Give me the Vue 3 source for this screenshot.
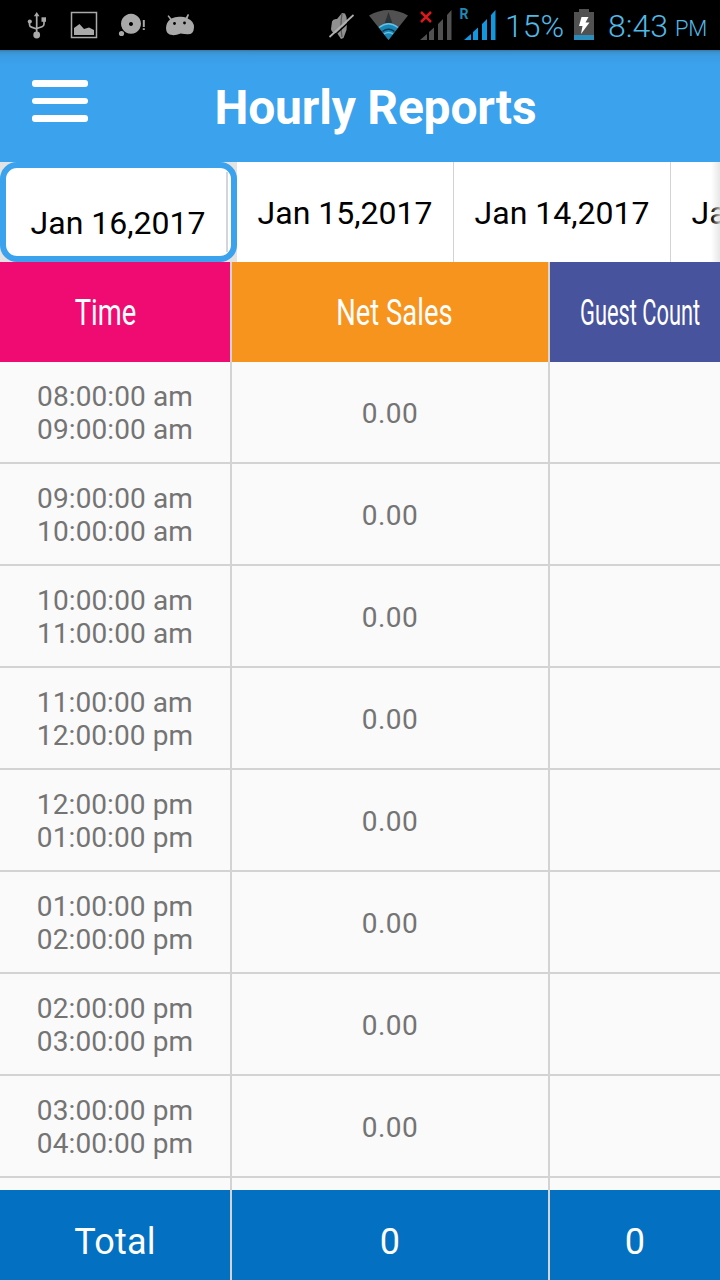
<script setup>
const hours = [
  ['08:00:00 am', '09:00:00 am'],
  ['09:00:00 am', '10:00:00 am'],
  ['10:00:00 am', '11:00:00 am'],
  ['11:00:00 am', '12:00:00 pm'],
  ['12:00:00 pm', '01:00:00 pm'],
  ['01:00:00 pm', '02:00:00 pm'],
  ['02:00:00 pm', '03:00:00 pm'],
  ['03:00:00 pm', '04:00:00 pm'],
]
const dates = ['Jan 15,2017', 'Jan 14,2017', 'Jan 13,2017']
</script>

<template>
  <div class="screen">
    <div class="status">
      <svg class="notices" width="220" height="50" viewBox="0 0 220 50" fill="#a9a9a9">
        <g fill="none" stroke="#a9a9a9" stroke-width="1.7">
          <path d="M36.7 34V15M29.500 22v2.500q0 2 2 2.600l5.200 1.900M44 20v4q0 2-2 2.700l-5.300 1.800" />
        </g>
        <path d="M36.7 12l2.8 4.2h-5.600z" />
        <circle cx="36.7" cy="35" r="3.4" /><circle cx="29.800" cy="21.500" r="2.1" />
        <rect x="41.500" y="17.300" width="4.500" height="4.500" />
        <rect x="71.5" y="12.5" width="25" height="25" fill="none" stroke="#a9a9a9" stroke-width="1.5" />
        <path d="M74 35v-7l5.500-4 4.500 5 5-1.500 5 2.500v5z" />
        <path fill-rule="evenodd" d="M131 13.800a10 10 0 1 0 .01 0zM131 22a2 2 0 1 1-.01 0z" />
        <circle cx="121.5" cy="33.5" r="2.6" />
        <path d="M142.800 20h2v7h-2zM142.800 28.200h2v1.800h-2z" />
        <path d="M167.500 16l1.200-.7 2.700 3.100q4.500-2.200 9.800-1.600 2.600.1 4.600.7l2-3.500 1.300.7-1.500 3.800q6.500 2.700 6.400 8.900-.3 6.900-6.400 6.900-3 0-7-.8-4.600 1.900-8.300 1.600-6.200-.1-6.300-7.100.1-5.500 4-8.600z" />
        <circle cx="174.500" cy="23.500" r="1.400" fill="#000" /><circle cx="184.500" cy="23" r="1.400" fill="#000" />
      </svg>
      <svg class="signals" width="190" height="50" viewBox="320 0 190 50">
        <path d="M332 21.500q1-3 5-2.500l5-6 3 .6q2 3 2 8.400l-.5 8-3 8-2.500 1-4-6q-5 1-6-4z" fill="#909090" />
        <path d="M342 14q-2 11 0 23" fill="none" stroke="#5a5a5a" stroke-width="1.300" />
        <path d="M331 38.500l24-22" stroke="#000" stroke-width="1.500" /><path d="M329.500 37l24-22" stroke="#b0b0b0" stroke-width="1.700" />
        <path d="M369 15.500q19.500-11 39 0L388.500 40z" fill="#515151" />
        <path d="M388.500 12l4 11.500h-8z" fill="#2c3336" />
        <path d="M379 27.500q9.500-7.500 19 0L388.500 40z" fill="#1887b8" />
        <path d="M379 27.500q9.500-7.500 19 0M384 34q4.500-3 9 0" fill="none" stroke="#62c3e9" stroke-width="1.500" />
        <path d="M382.500 31.500q6-4.500 12 0" fill="none" stroke="#08384d" stroke-width="1.500" />
        <path d="M421 12l10 10M431 12l-10 10" stroke="#d8191d" stroke-width="2.500" />
        <path d="M420 40l7-6v6zM429 32l5-4.500V40h-5zM438 24l5-5v21h-5zM447 15l4.500-5v30H447z" fill="#515151" />
        <path d="M464 40l7-6v6zM473 32l5-4.500V40h-5zM482 24l5-5v21h-5zM491 15l4.500-5v30H491z" fill="#1098e0" />
        <text x="459.500" y="18.500" class="roam">R</text>
      </svg>
      <span class="pct">15%</span>
      <svg class="battery" width="20" height="31" viewBox="0 0 20 31">
        <path d="M5 0h10v3h5v28H0V3h5z" fill="#515151" /><path d="M0 26h20v5H0z" fill="#2b8dbd" />
        <path d="M7.500 8h7l-3 5.500h4L7 25l1.500-8H5z" fill="#fff" />
      </svg>
      <span class="clock">8:43</span><span class="pm">PM</span>
    </div>

    <header class="bar">
      <svg class="menu" width="56" height="42" viewBox="0 0 56 42" fill="#fff">
        <rect width="56" height="7" rx="3" /><rect y="18" width="56" height="6" rx="3" /><rect y="35" width="56" height="7" rx="3" />
      </svg>
      <h1>Hourly Reports</h1>
    </header>

    <nav class="dates">
      <div class="current-wrap"><div class="current"><span>Jan 16,2017</span></div></div>
      <div v-for="d in dates" :key="d" class="date">{{ d }}</div>
    </nav>

    <div class="row head">
      <div class="pink"><span class="narrow time">Time</span></div>
      <div class="orange"><span class="narrow net">Net Sales</span></div>
      <div class="indigo"><span class="narrower">Guest Count</span></div>
    </div>
    <main>
      <div v-for="h in hours" :key="h[0]" class="row hour">
        <div><p><span>{{ h[0] }}</span><span>{{ h[1] }}</span></p></div>
        <div class="sales">0.00</div>
        <div></div>
      </div>
      <div class="row hour"><div></div><div></div><div></div></div>
    </main>
    <div class="row total"><div>Total</div><div>0</div><div>0</div></div>
  </div>
</template>

<style>
html, body { margin: 0; overflow: hidden; }
</style>

<style scoped>
* { box-sizing: border-box; }
.screen { width: 720px; height: 1280px; overflow: hidden; display: flex; flex-direction: column; background: #fafafa; font-family: Roboto, sans-serif; }
.status { height: 50px; flex: none; background: #000; display: flex; align-items: flex-start; color: #4fb9e6; font-size: 32px; font-weight: 300; line-height: 50px; white-space: nowrap; }
.status svg { flex: none; }
.signals { margin-left: 100px; }
.roam { font: bold 14px Roboto, sans-serif; fill: #2287b7; }
.pct { width: 64px; margin-left: -5px; padding-top: 1px; }
.battery { margin: 9px 0 0 5px; }
.clock { width: 61px; margin-left: 14px; padding-top: 1px; }
.pm { font-size: 22px; margin-left: 6px; padding-top: 4px; letter-spacing: -0.3px; }
.bar { height: 112px; flex: none; display: flex; background: linear-gradient(#3879a6 0, #3b91cf 2px, #3b9ce2 6px, #3ba2ed 15px); color: #fff; }
.menu { margin: 30px 0 0 32px; flex: none; }
h1 { margin: 0 0 0 126.500px; padding-top: 2px; font-size: 48px; line-height: 112px; font-weight: 700; letter-spacing: -0.2px; white-space: nowrap; }
.dates { height: 100px; flex: none; display: flex; background: #fff; color: #000; font-size: 32px; white-space: nowrap; overflow: hidden; position: relative; }
.dates::after { content: ""; position: absolute; right: 0; top: 0; width: 9px; height: 100px; background: linear-gradient(90deg, #fff0, #e2e2e2d0); }
.current-wrap { width: 237px; flex: none; background: #e3e3e3; }
.current { height: 100px; border: 6px solid #3ba2ed; border-radius: 17px; background: #fff; display: flex; align-items: center; padding: 4px 3px 4px 0; }
.current span { width: 222px; height: 80px; border-right: 2px solid #d3d5d8; line-height: 80px; text-align: center; padding: 11px 0 0 4px; }
.date { width: 217px; flex: none; border-right: 1px solid #d3d3d3; line-height: 102px; text-align: center; }
.row { display: grid; grid-template-columns: 232px 318px 170px; flex: none; }
.row > div { border-right: 2px solid #d3d3d3; display: flex; align-items: center; justify-content: center; white-space: nowrap; }
.row > div:last-child { border-right: 0; }
.head { height: 100px; color: #fff; font-size: 36px; }
.head span { padding-top: 2px; }
.narrow { transform: scaleX(0.76); }
.time { margin-right: 19px; }
.net { margin-left: 9px; }
.narrower { transform: scaleX(0.606); margin-left: 10px; }
.row > .pink { background: #ef0b72; }
.row > .orange { background: #f7941e; border-right-color: #dfd5c8; }
.row > .indigo { background: #47539d; }
main { height: 828px; flex: none; overflow: hidden; }
.hour { height: 102px; color: #747474; font-size: 28px; }
.hour > div { border-bottom: 2px solid #d3d3d3; }
.hour p { margin: 2px 0 0; line-height: 33px; letter-spacing: 0.1px; display: flex; flex-direction: column; }
.hour .sales { letter-spacing: 0.5px; padding-top: 3px; }
.total { height: 90px; background: #0370c1; color: #fff; font-size: 36px; letter-spacing: 0.2px; }
.total > div { padding-top: 13px; }
</style>
